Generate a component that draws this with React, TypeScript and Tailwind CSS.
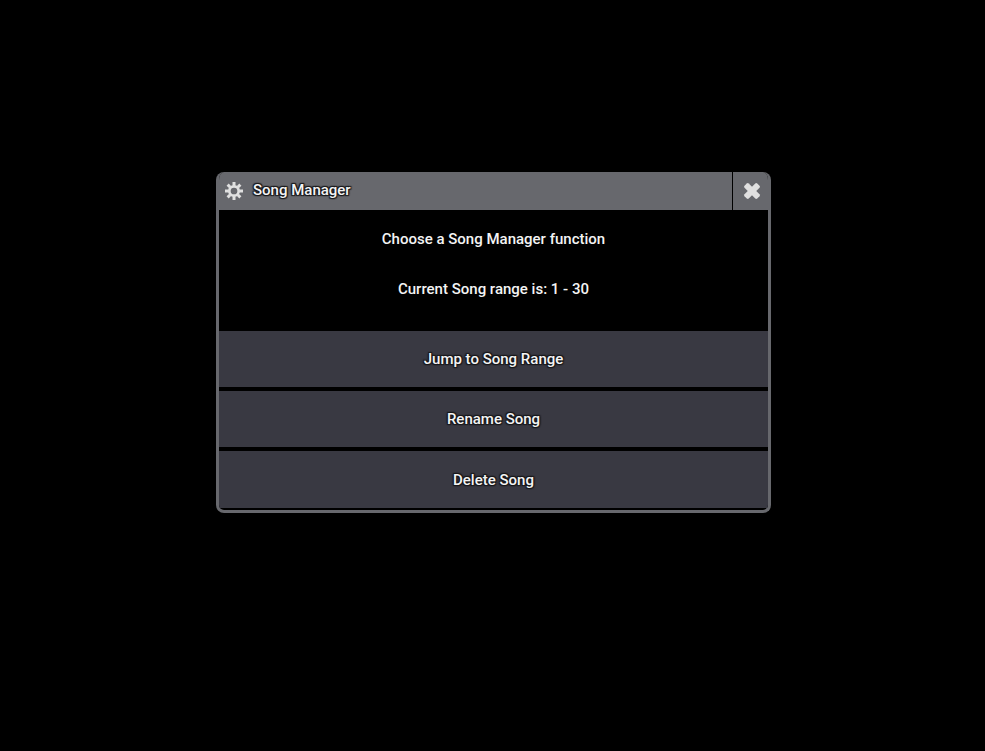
const songRange = { first: 1, last: 30 }

const actions = ["Jump to Song Range", "Rename Song", "Delete Song"]

const toothAngles = [0, 45, 90, 135, 180, 225, 270, 315]

const outline =
  "[text-shadow:0_0_2px_#18181b,1px_1px_1px_#18181b,-1px_-1px_1px_#18181b,1px_-1px_1px_#18181b,-1px_1px_1px_#18181b]"

function GearIcon() {
  return (
    <svg viewBox="-9 -9 18 18" className="size-[18px] text-[#e0e0e0]" aria-hidden="true">
      <circle r="4.7" fill="none" stroke="currentColor" strokeWidth="2.7" />
      {toothAngles.map((angle) => (
        <path key={angle} d="M-1.5 -5.3 V-9 H1.5 V-5.3 Z" fill="currentColor" transform={`rotate(${angle})`} />
      ))}
    </svg>
  )
}

function CloseIcon() {
  return (
    <svg viewBox="-9 -9 18 18" className="size-[18px] text-[#e0e0e0]" aria-hidden="true">
      <g fill="currentColor" transform="rotate(45)">
        <rect x="-9" y="-3" width="18" height="6" rx="1.4" />
        <rect x="-3" y="-9" width="6" height="18" rx="1.4" />
      </g>
    </svg>
  )
}

export default function App() {
  return (
    <main className="min-h-screen bg-black pt-43 pr-4 pl-4.5 font-['Roboto',sans-serif] text-[15px] leading-5 font-medium text-[#f4f4f4]">
      <section
        role="dialog"
        aria-labelledby="dialog-title"
        className="mx-auto w-full max-w-[555px] overflow-hidden rounded-lg border-3 border-t-0 border-[#67686d] bg-black"
      >
        <header className="flex h-[38px] bg-[#67686d]">
          <div className="flex flex-1 items-center gap-2.5 pl-1.5">
            <GearIcon />
            <h1 id="dialog-title" className={`pb-0.5 ${outline}`}>
              Song Manager
            </h1>
          </div>
          <button type="button" aria-label="Close" className="flex w-9 items-center justify-center border-l border-black pl-0.5">
            <CloseIcon />
          </button>
        </header>

        <div className="flex flex-col gap-[30px] pt-[19px] pb-8 text-center">
          <p>Choose a Song Manager function</p>
          <p>
            Current Song range is: {songRange.first} - {songRange.last}
          </p>
        </div>

        <div className="flex flex-col gap-1 pb-0.5">
          {actions.map((action) => (
            <button key={action} type="button" className={`h-14 w-full bg-[#393942] last:h-[57px] ${outline}`}>
              {action}
            </button>
          ))}
        </div>
      </section>
    </main>
  )
}
